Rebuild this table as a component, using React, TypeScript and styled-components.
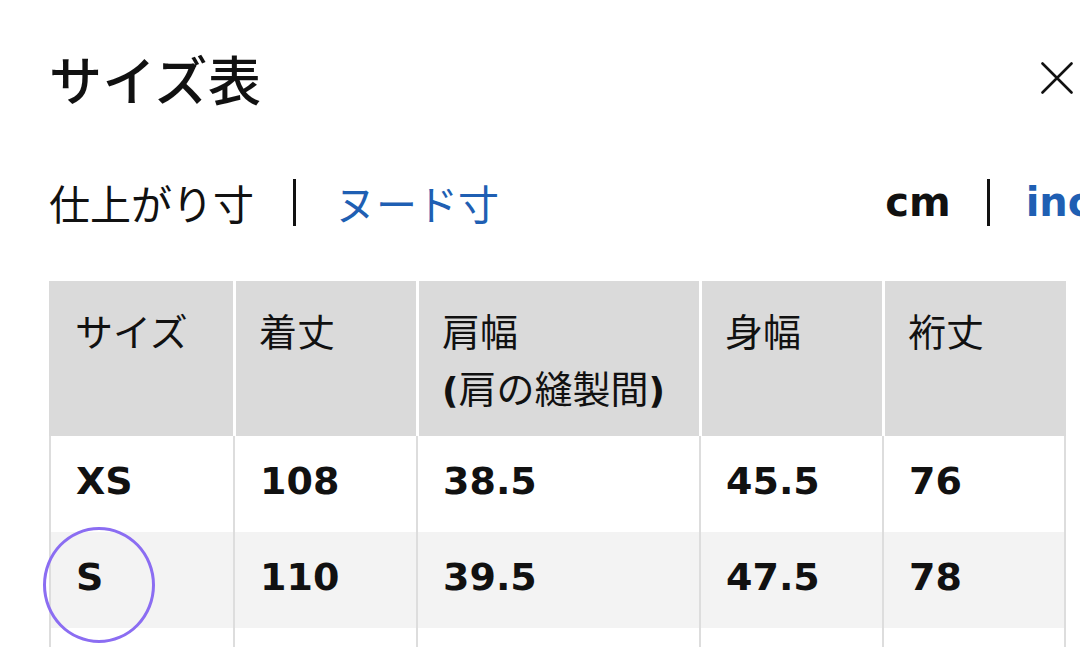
import React from "react";
import styled, { createGlobalStyle } from "styled-components";

const Global = createGlobalStyle`
  html, body { margin: 0; padding: 0; background: #fff; }
  body {
    font-family: "Noto Sans CJK JP", "Noto Sans", sans-serif;
    color: #111;
    overflow: hidden;
  }
`;

const Page = styled.div`
  width: 1080px;
  height: 647px;
  overflow: hidden;
  box-sizing: border-box;
  padding: 48px 0 0 49px;
  background: #fff;
`;

const Header = styled.header`
  display: flex;
  align-items: center;
  justify-content: space-between;
  width: 1024px;
  height: 60px;
`;

const Title = styled.h1`
  margin: 0;
  font-size: 53px;
  line-height: 60px;
  font-weight: 500;
  letter-spacing: 0.5px;
  color: #111;
`;

const CloseButton = styled.button`
  width: 32px;
  height: 32px;
  padding: 0;
  border: 0;
  background: transparent;
  display: flex;
  align-items: center;
  justify-content: center;
  cursor: pointer;
`;

const ToggleRow = styled.div`
  margin-top: 64px;
  height: 60px;
  width: 1071px;
  display: flex;
  align-items: center;
  justify-content: space-between;
`;

const ToggleGroup = styled.div<{ $gap: number }>`
  display: flex;
  align-items: center;
  gap: ${(p) => p.$gap}px;
  white-space: nowrap;
`;

const ToggleText = styled.span<{ $active?: boolean; $latin?: boolean }>`
  font-family: ${(p) =>
    p.$latin
      ? `"DejaVu Sans", "Liberation Sans", sans-serif`
      : `"Noto Sans CJK JP", sans-serif`};
  font-size: ${(p) => (p.$latin ? 40 : 41)}px;
  font-weight: ${(p) => (p.$latin ? 700 : 400)};
  line-height: 60px;
  color: ${(p) => (p.$active ? "#111" : "#1f5fb3")};
`;

const Divider = styled.span`
  display: block;
  width: 3px;
  height: 47px;
  background: #111;
`;

const Table = styled.div`
  margin-top: 49px;
  width: 1017px;
`;

const Row = styled.div<{ $alt?: boolean }>`
  display: grid;
  grid-template-columns: 184px 183px 283px 183px 184px;
  background: ${(p) => (p.$alt ? "#f3f3f3" : "#fff")};
`;

const HeadCell = styled.div`
  box-sizing: border-box;
  background: #dadada;
  height: 155px;
  padding: 20px 20px 0 23px;
  border-left: 3px solid #fff;
  font-size: 38px;
  line-height: 57px;
  font-weight: 400;
  color: #111;
  &:first-child {
    border-left: 0;
    padding-left: 26px;
  }
`;

const Paren = styled.span`
  font-family: "DejaVu Sans", sans-serif;
  font-weight: 700;
  font-size: 36px;
`;

const Cell = styled.div`
  position: relative;
  box-sizing: border-box;
  height: 96px;
  display: flex;
  align-items: center;
  padding: 0 20px 6px 25px;
  border-left: 2px solid #dddddd;
  font-family: "DejaVu Sans", "Liberation Sans", sans-serif;
  font-weight: 700;
  font-size: 38px;
  line-height: 1;
  color: #111;
  &:last-child {
    border-right: 2px solid #dddddd;
  }
`;

const Highlight = styled.span`
  position: absolute;
  left: -8px;
  top: -5px;
  width: 112px;
  height: 116px;
  box-sizing: border-box;
  border: 3px solid #8b6df2;
  border-radius: 50%;
  pointer-events: none;
`;

const heads: React.ReactNode[] = [
  "サイズ",
  "着丈",
  (
    <>
      肩幅
      <br />
      <Paren>(</Paren>肩の縫製間<Paren>)</Paren>
    </>
  ),
  "身幅",
  "裄丈",
];

const rows = [
  { size: "XS", values: ["108", "38.5", "45.5", "76"] },
  { size: "S", values: ["110", "39.5", "47.5", "78"], mark: true },
  { size: "M", values: ["112", "40.5", "49.5", "80"] },
];

export default function App() {
  return (
    <>
      <Global />
      <Page>
        <Header>
          <Title>サイズ表</Title>
          <CloseButton aria-label="閉じる">
            <svg width="32" height="32" viewBox="0 0 32 32">
              <path
                d="M1.5 1.5 L30.5 30.5 M30.5 1.5 L1.5 30.5"
                stroke="#111"
                strokeWidth="2.6"
                strokeLinecap="round"
              />
            </svg>
          </CloseButton>
        </Header>

        <ToggleRow>
          <ToggleGroup $gap={39}>
            <ToggleText $active>仕上がり寸</ToggleText>
            <Divider />
            <ToggleText>ヌード寸</ToggleText>
          </ToggleGroup>
          <ToggleGroup $gap={36}>
            <ToggleText $active $latin>
              cm
            </ToggleText>
            <Divider />
            <ToggleText $latin>inch</ToggleText>
          </ToggleGroup>
        </ToggleRow>

        <Table>
          <Row>
            {heads.map((h, i) => (
              <HeadCell key={i}>{h}</HeadCell>
            ))}
          </Row>
          {rows.map((r, i) => (
            <Row key={r.size} $alt={i % 2 === 1}>
              <Cell>
                {r.size}
                {r.mark && <Highlight />}
              </Cell>
              {r.values.map((v, j) => (
                <Cell key={j}>{v}</Cell>
              ))}
            </Row>
          ))}
        </Table>
      </Page>
    </>
  );
}
